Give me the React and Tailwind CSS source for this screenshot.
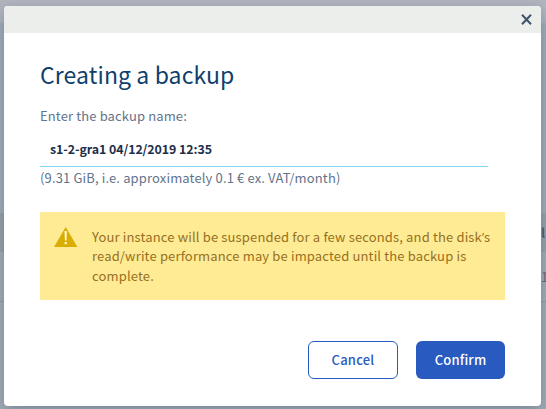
export default function App() {
  return (
    <div className="relative h-[409px] w-[546px] overflow-hidden bg-[#a3adb8] font-['Noto_Sans_CJK_SC','Noto_Sans',sans-serif] text-[13px]">
      <div className="flex h-full flex-col">
        <div className="h-[23px] shrink-0 bg-[#b0b5be]" />
        <div className="h-[190px] shrink-0 bg-[#a1aeb9]" />
        <div className="flex h-[39px] shrink-0 items-center justify-end bg-[#98a3a9]">
          <span className="w-[5px] overflow-hidden font-bold text-[#4c6378]">l</span>
        </div>
        <div className="flex h-[50px] shrink-0 items-center justify-end border-b border-[#929ca9] bg-[#a3adb8]">
          <span className="w-[5px] overflow-hidden text-[#5d6d80]">1</span>
        </div>
      </div>
      <div className="absolute left-1 top-1.5 flex h-[400px] w-[537px] flex-col overflow-hidden rounded bg-white shadow-[0_5px_15px_rgba(0,20,50,0.25)]">
        <div className="flex h-[27px] shrink-0 items-center justify-end bg-[#ebeeeb] pr-[9px]">
          <svg className="h-[11px] w-[11px]" viewBox="0 0 11 11" fill="none" stroke="#3e546c" strokeWidth="2">
            <path d="M1 .8 10 10.3M10 .8 1 10.3" />
          </svg>
        </div>
        <div className="flex flex-col px-9">
          <h1 className="mt-[27px] h-[33px] whitespace-nowrap text-[23px] leading-[28px] tracking-[0.1px] text-[#113f6d]">Creating a backup</h1>
          <p className="mt-[13px] h-5 whitespace-nowrap leading-5 tracking-[0.13px] text-[#63738a]">Enter the backup name:</p>
          <div className="mt-[7px] flex h-[34px] w-[448px] items-center border-b border-[#7fd6f8] pl-2.5 text-[12.4px] font-bold tracking-[-0.08px] text-[#1c2f4a]">
            s1-2-gra1 04/12/2019 12:35
          </div>
          <p className="mt-px h-[21px] whitespace-nowrap leading-5 tracking-[0.14px] text-[#63738a]">(9.31 GiB, i.e. approximately 0.1 € ex. VAT/month)</p>
          <div className="mt-[23px] flex h-[88px] bg-[#feeb94] pl-3.5 pt-[15px]">
            <svg className="h-5 w-6 shrink-0" viewBox="0 0 24 20">
              <path d="M11.7 0 23.4 20H0Z" fill="#d9ae00" />
              <path d="M10.5 4h2.4l-.4 9.6h-1.6ZM10.6 15h2.2v2.3h-2.2Z" fill="#fff8dc" />
            </svg>
            <p className="ml-3.5 whitespace-nowrap leading-[19.4px] tracking-[0.15px] text-[#987022]">
              Your instance will be suspended for a few seconds, and the disk<span className="font-['Open_Sans',sans-serif] text-[12px] leading-none">’</span>s
              <br />
              read/write performance may be impacted until the backup is
              <br />
              complete.
            </p>
          </div>
          <div className="mt-[41px] flex justify-end gap-[18px] font-medium tracking-[0.2px]">
            <button className="h-[38px] w-[90px] rounded-md border border-[#285abf] bg-white text-[#285abf]">Cancel</button>
            <button className="h-[38px] w-[89px] rounded-md bg-[#285abf] text-white">Confirm</button>
          </div>
        </div>
      </div>
    </div>
  );
}
